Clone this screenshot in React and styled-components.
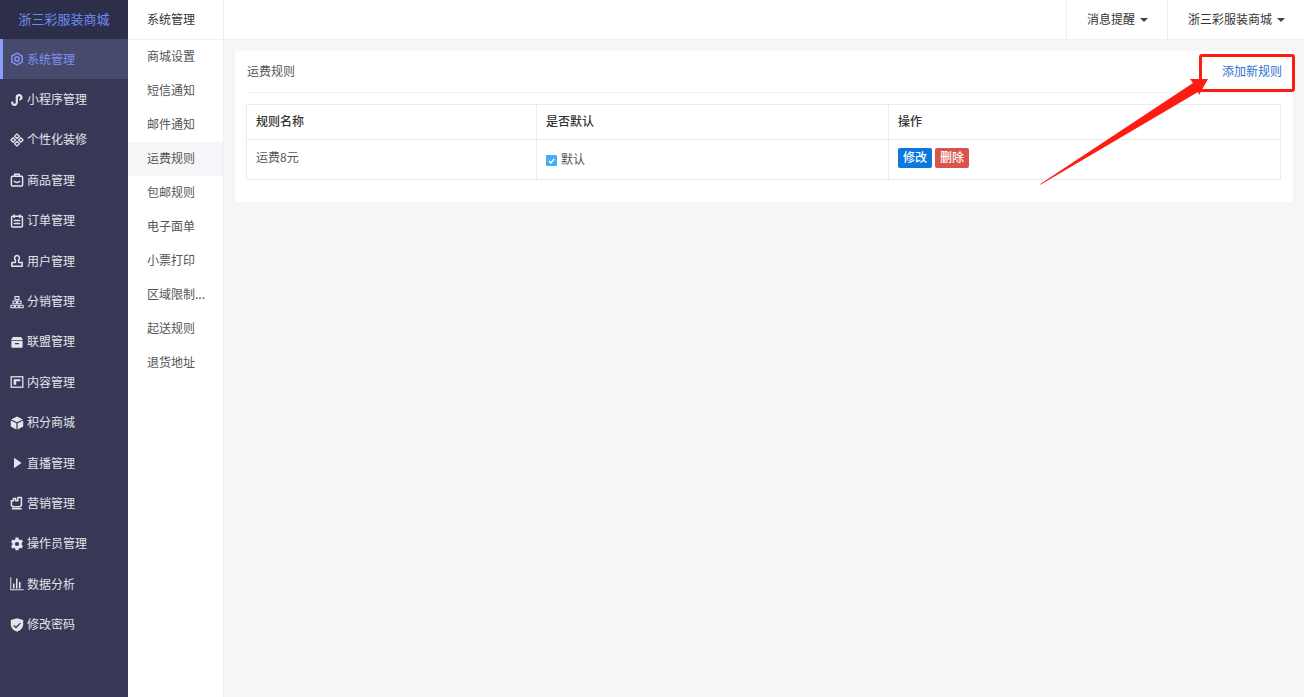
import React from 'react';
import styled, { createGlobalStyle } from 'styled-components';

const Global = createGlobalStyle`
  html, body { margin: 0; padding: 0; height: 100%; }
  body { font-family: "Noto Sans CJK SC", "Liberation Sans", sans-serif; font-size: 12px; color: #515a6e; background: #f5f6f8; overflow: hidden; }
  * { box-sizing: border-box; }
`;
const Page = styled.div`position: relative; display: flex; width: 1304px; height: 697px; overflow: hidden;`;
const Sidebar = styled.aside`width: 128px; flex: none; background: #363856; color: #e4e4ea;`;
const Logo = styled.div`height: 39px; padding-bottom: 2px; background: #2d2e4a; color: #6d8cf5; font-size: 13px; display: flex; align-items: center; justify-content: center; border-bottom-right-radius: 3px;`;
const MenuItem = styled.div`
  height: 40.4px; display: flex; align-items: center; gap: 3px; padding-left: ${p => p.$active ? '7px' : '10px'};
  ${p => p.$active ? 'background: #474a6d; border-left: 3px solid #8a9dfa; color: #7e93f2;' : ''}
`;
const MenuLabel = styled.span`position: relative; top: -1px;`;
const IconBox = styled.svg`width: 14px; height: 14px; flex: none;`;
const SubNav = styled.nav`width: 96px; flex: none; background: #fff; border-right: 1px solid #eef0f3;`;
const SubTitle = styled.div`height: 40px; padding: 0 0 2px 19px; display: flex; align-items: center; color: #333; border-bottom: 1px solid #eef0f3;`;
const SubList = styled.div`padding: 0;`;
const SubItem = styled.div`
  height: 34px; padding: 0 0 3px 19px; display: flex; align-items: center; color: #555;
  background: ${p => p.$active ? '#f5f6f8' : 'transparent'};
`;
const Main = styled.main`flex: 1; min-width: 0; display: flex; flex-direction: column;`;
const TopBar = styled.header`height: 40px; flex: none; background: #fff; border-bottom: 1px solid #eef0f3; display: flex; justify-content: flex-end;`;
const TopItem = styled.div`display: flex; align-items: center; gap: 5px; padding: 0 19px 3px 20px; border-left: 1px solid #eef0f3; color: #333;`;
const Caret = styled.span`width: 0; height: 0; border-left: 4px solid transparent; border-right: 4px solid transparent; border-top: 4px solid #444; margin-top: 3px;`;
const Content = styled.div`padding: 11px 11px 0 11px;`;
const Card = styled.section`background: #fff; padding: 0 12px 22px 12px; height: 151px;`;
const CardHead = styled.div`height: 42px; padding-bottom: 3px; border-bottom: 1px solid #eef0f3; display: flex; align-items: center; justify-content: space-between; color: #555;`;
const AddLink = styled.a`color: #2d6fd8; margin-left: auto; margin-right: -1px;`;
const Table = styled.table`width: 1035px; margin: 11px 0 0 -1px; border-collapse: collapse; table-layout: fixed; color: #555;`;
const Th = styled.th`height: 35px; border: 1px solid #e9ebee; padding: 0 8px 3px 9px; text-align: left; font-weight: 500; color: #333;`;
const Td = styled.td`height: 40px; border: 1px solid #e9ebee; padding: 0 8px 0 9px; vertical-align: middle;`;
const NameCell = styled.span`display: block; margin-top: -6px;`;
const Check = styled.span`display: flex; align-items: center; gap: 4px; margin-top: 0;`;
const CheckBox = styled.span`width: 11px; height: 11px; margin-top: 2px; background: #46aef7; border-radius: 1px; display: flex; align-items: center; justify-content: center;`;
const CheckLabel = styled.span`position: relative; top: -1px;`;
const Actions = styled.div`display: flex; gap: 3px; margin-top: -3px;`;
const Btn = styled.button`width: 34px; height: 20px; border: 0; border-radius: 2px; padding: 0 0 3px; color: #fff; font: inherit; font-weight: 500; background: ${p => p.$danger ? '#d9534f' : '#0b78dc'};`;
const RedBox = styled.div`position: absolute; left: 1199px; top: 54px; width: 96px; height: 38px; border: 3px solid #fe1c12; border-radius: 3px; pointer-events: none;`;
const ArrowSvg = styled.svg`position: absolute; left: 0; top: 0; width: 1304px; height: 697px; pointer-events: none;`;

const S = { fill: 'none', stroke: 'currentColor', strokeWidth: 1.5, strokeLinecap: 'round', strokeLinejoin: 'round' };
const F = { fill: 'currentColor' };
const icons = [
  <g {...S}><path d="M7 1.2 12.2 4.1v5.8L7 12.8 1.8 9.9V4.1z"/><circle cx="7" cy="7" r="2.2"/></g>,
  <g {...S} strokeWidth="2.2"><path d="M2.2 9.6a2.3 2.3 0 1 0 4.6 0V4.4a2.3 2.3 0 1 1 3.4 2"/></g>,
  <g {...S} strokeWidth="1.3"><path d="M7 .9 9.3 3.2 7 5.5 4.7 3.2z"/><path d="M7 8.5 9.3 10.8 7 13.1 4.7 10.8z"/><path d="M3.2 4.8.9 7l2.3 2.2 2.2-2.2zM10.8 4.8 13.1 7l-2.3 2.2L8.6 7z"/></g>,
  <g {...S}><rect x="1.4" y="3.2" width="11.2" height="9.8" rx="1"/><path d="M4.6 3.2V1.2h4.8v2M4.4 8.4c1 1.5 4.2 1.5 5.2 0"/></g>,
  <g {...S}><rect x="1.6" y="2.2" width="10.8" height="10.8" rx="1"/><path d="M4.2 .9v2.6M9.8 .9v2.6M4.4 6.4h5.2M4.4 9.4h5.2"/></g>,
  <g {...S}><path d="M4.6 4a2.4 2.4 0 1 1 4.8 0c0 1.2-.7 2-1 2.6l.5 2h3.3v3.7H1.8V8.6h3.3l.5-2C5.3 6 4.6 5.2 4.6 4z"/></g>,
  <g {...S} strokeWidth="1.1"><rect x="5" y="1.6" width="4" height="3"/><rect x="3" y="6" width="3.4" height="2.8"/><rect x="7.6" y="6" width="3.4" height="2.8"/><rect x=".9" y="10.2" width="3.4" height="2.6"/><rect x="5.3" y="10.2" width="3.4" height="2.6"/><rect x="9.7" y="10.2" width="3.4" height="2.6"/></g>,
  <g {...F}><path d="M2.8 2h8.4l1.8 3H1z"/><path d="M1.4 5.8h11.2V12a.8.8 0 0 1-.8.8H2.2a.8.8 0 0 1-.8-.8zM5 8v1.2h4V8z" fillRule="evenodd"/></g>,
  <g><rect x="1.2" y="1.8" width="11.6" height="10.4" fill="none" stroke="currentColor" strokeWidth="1.3"/><path d="M3.6 4.2h6.8v2H6.2v3.6H3.6z" fill="currentColor"/></g>,
  <g {...F}><path d="M7 .6 12.9 3.4 7 6.2 1.1 3.4z"/><path d="M.8 4.4 6.4 7.2v6.2L.8 10.6zM13.2 4.4 7.6 7.2v6.2l5.6-2.8z"/></g>,
  <path {...F} d="M4 1.8 11.6 7 4 12.2z"/>,
  <g {...S}><path d="M3.4 2.6h2.2v2.2h2.2V1.4h3.6v8l-1.5 1.4H2.6L1.4 9.2V4.8h2z"/><path d="M2.4 12.8h8.8"/></g>,
  <path {...F} fillRule="evenodd" d="M5.6.6h2.8l.4 1.8 1.1.6 1.7-.6 1.4 2.4-1.3 1.2v1.9l1.3 1.2-1.4 2.4-1.7-.6-1.1.6-.4 1.8H5.6l-.4-1.8-1.1-.6-1.7.6L1 9.3l1.3-1.2V6.2L1 5l1.4-2.4 1.7.6 1.1-.6zM7 4.9a2.1 2.1 0 1 0 0 4.2 2.1 2.1 0 0 0 0-4.2z"/>,
  <g {...F}><path d="M.3.4h1v11.8h12.4v1H.3z"/><path d="M3 6.4h1.1v5H3zM6 1.6h1.1v9.8H6zM9 5h1.1v6.4H9z" /><path d="M4.1 6.4h1v5h-1zM7.1 1.6h1v9.8h-1zM10.1 5h1v6.4h-1z" opacity=".5"/></g>,
  <path {...F} fillRule="evenodd" d="M7 .2 13.2 2v4.6c0 3.2-2.4 5.8-6.2 7.2C3.2 12.4.8 9.8.8 6.6V2zM4 6.9l-.8.8 2.8 2.7 4.8-4.9-.8-.8L6 8.6z"/>,
];
const menus = ['系统管理','小程序管理','个性化装修','商品管理','订单管理','用户管理','分销管理','联盟管理','内容管理','积分商城','直播管理','营销管理','操作员管理','数据分析','修改密码'];
const subs = ['商城设置','短信通知','邮件通知','运费规则','包邮规则','电子面单','小票打印','区域限制...','起送规则','退货地址'];

export default function App() {
  return (
    <Page>
      <Global />
      <Sidebar>
        <Logo>浙三彩服装商城</Logo>
        {menus.map((m, i) => (
          <MenuItem key={m} $active={i === 0}>
            <IconBox viewBox="0 0 14 14">{icons[i]}</IconBox>
            <MenuLabel>{m}</MenuLabel>
          </MenuItem>
        ))}
      </Sidebar>
      <SubNav>
        <SubTitle>系统管理</SubTitle>
        <SubList>
          {subs.map((s, i) => <SubItem key={s} $active={i === 3}>{s}</SubItem>)}
        </SubList>
      </SubNav>
      <Main>
        <TopBar>
          <TopItem>消息提醒<Caret /></TopItem>
          <TopItem>浙三彩服装商城<Caret /></TopItem>
        </TopBar>
        <Content>
          <Card>
            <CardHead>运费规则<AddLink>添加新规则</AddLink></CardHead>
            <Table>
              <colgroup><col width="290" /><col width="352" /><col /></colgroup>
              <thead><tr><Th>规则名称</Th><Th>是否默认</Th><Th>操作</Th></tr></thead>
              <tbody>
                <tr>
                  <Td><NameCell>运费8元</NameCell></Td>
                  <Td><Check><CheckBox><svg width="7" height="6" viewBox="0 0 7 6"><path d="M.8 3 2.8 5 6.2 1" fill="none" stroke="#fff" strokeWidth="1.3"/></svg></CheckBox><CheckLabel>默认</CheckLabel></Check></Td>
                  <Td><Actions><Btn>修改</Btn><Btn $danger>删除</Btn></Actions></Td>
                </tr>
              </tbody>
            </Table>
          </Card>
        </Content>
      </Main>
      <RedBox />
      <ArrowSvg viewBox="0 0 1304 697"><polygon points="1040,185 1041,183.5 1193,83 1190,79 1208,79 1199,95 1198,92" fill="#fe1c12" /></ArrowSvg>
    </Page>
  );
}
